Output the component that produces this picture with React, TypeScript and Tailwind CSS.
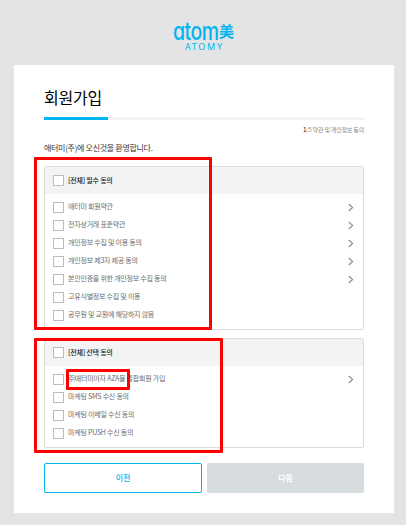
import React from "react";

type Item = { label: string; link?: boolean };

const required: Item[] = [
  { label: "애터미 회원약관", link: true },
  { label: "전자상거래 표준약관", link: true },
  { label: "개인정보 수집 및 이용 동의", link: true },
  { label: "개인정보 제3자 제공 동의", link: true },
  { label: "본인인증을 위한 개인정보 수집 동의", link: true },
  { label: "고유식별정보 수집 및 이용" },
  { label: "공무원 및 교원에 해당하지 않음" },
];

const optional: Item[] = [
  { label: "㈜애터미아자 AZA몰 통합회원 가입", link: true },
  { label: "마케팅 SMS 수신 동의" },
  { label: "마케팅 이메일 수신 동의" },
  { label: "마케팅 PUSH 수신 동의" },
];

function Box() {
  return <span className="h-[11px] w-[11px] shrink-0 border border-[#bdbdbd] bg-white" />;
}

function Chevron() {
  return (
    <svg className="ml-auto" width="6" height="9" viewBox="0 0 6 9" fill="none" stroke="#929292" strokeWidth="1.25">
      <path d="M0.8 1 4.6 4.5 0.8 8" />
    </svg>
  );
}

function Panel({ title, items, className }: { title: string; items: Item[]; className: string }) {
  return (
    <section className={`flex flex-col rounded-[2px] border border-[#dcdcdc] ${className}`}>
      <header className="flex h-[27px] items-center gap-1 bg-[#f3f3f3] pl-2 tracking-[-0.22px] text-[#222]">
        <Box />
        <span className="relative -top-px font-medium">{title}</span>
      </header>
      <ul className="pt-1">
        {items.map((item) => (
          <li key={item.label} className="flex h-[18px] items-center gap-1 pr-[9px] pl-2 text-[#6c6c6c]">
            <Box />
            <span className="relative -top-[1.5px]">{item.label}</span>
            {item.link && <Chevron />}
          </li>
        ))}
      </ul>
    </section>
  );
}

export default function App() {
  return (
    <div className="relative flex h-[525px] w-[406px] flex-col overflow-hidden bg-[#e4e4e4] pl-[14px] font-['Noto_Sans_CJK_KR',sans-serif] text-[7px] leading-[10px] tracking-[-0.23px]">
      <div className="ml-[159px] flex h-[65px] w-[62px] flex-col pt-[20px] text-[#00b5ef]">
        <div className="flex h-[22px] items-center">
          <div className="w-[46px]">
            <span className="block w-[46px] origin-left scale-x-[0.78] font-['Inter',sans-serif] text-[25px] leading-[22px] font-medium tracking-[-0.6px] [font-feature-settings:'cv11']">atom</span>
          </div>
          <span className="text-[15px] leading-[22px] font-bold tracking-normal">美</span>
        </div>
        <span className="pl-[12px] font-['Noto_Sans',sans-serif] text-[9px] leading-[9px] tracking-[1.7px]">ATOMY</span>
      </div>

      <main className="flex h-[448px] w-[380px] flex-col bg-white px-[30px]">
        <h1 className="mt-[20px] h-[32px] text-[16px] leading-[24px] tracking-[-0.25px] text-black">회원가입</h1>
        <div className="h-[3px] bg-[#f3f3f3]">
          <div className="h-[3px] w-16 bg-[#00b5ef]" />
        </div>
        <p className="mt-[5px] text-right text-[6px] leading-[10px] tracking-[-0.19px] text-[#888]">
          <b className="font-medium text-[#333]">1</b>/5 약관 및 개인정보 동의
        </p>
        <p className="mt-[8px] h-[23px] text-[8px] leading-[10px] tracking-[-0.3px] text-[#333]">애터미(주)에 오신것을 환영합니다.</p>

        <Panel title="[전체] 필수 동의" items={required} className="h-[164px]" />
        <Panel title="[전체] 선택 동의" items={optional} className="mt-2 h-[110px]" />

        <div className="mt-[15px] flex gap-[5px] text-[8px] tracking-normal">
          <button className="h-[30px] w-[158px] rounded-[2px] border border-[#00b5ef] font-medium text-[#00b5ef]">이전</button>
          <button className="h-[30px] w-[157px] rounded-[2px] bg-[#d7dddf] font-bold text-white">다음</button>
        </div>
      </main>

      <div className="absolute top-[157px] left-[34px] h-[173px] w-[178px] rounded-[1px] border-3 border-[#f00]" />
      <div className="absolute top-[338px] left-[34px] h-[115px] w-[189px] rounded-[1px] border-3 border-[#f00]" />
      <div className="absolute top-[369px] left-[66px] h-[21px] w-[64px] rounded-[1px] border-3 border-[#f00]" />
    </div>
  );
}
